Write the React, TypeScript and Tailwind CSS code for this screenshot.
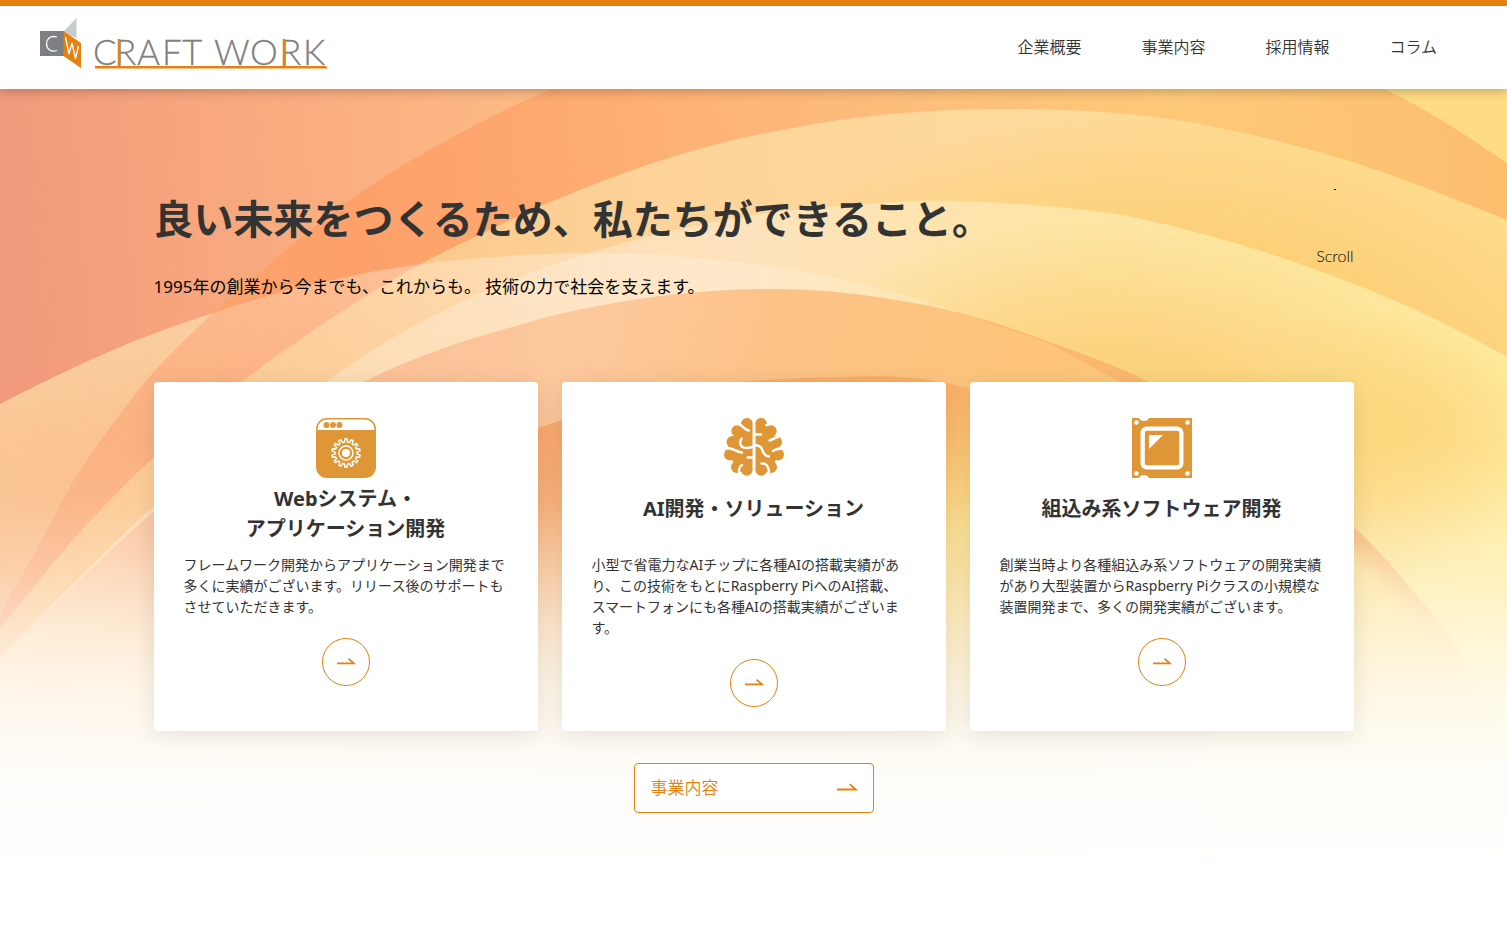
import React from "react";

type Point = [number, number];

/** Smooth curve through the given points. */
function curve(points: Point[]): string {
  let d = `M${points[0][0]} ${points[0][1]}`;
  for (let i = 0; i < points.length - 1; i++) {
    const a = points[Math.max(i - 1, 0)];
    const b = points[i];
    const c = points[i + 1];
    const e = points[Math.min(i + 2, points.length - 1)];
    d += `C${b[0] + (c[0] - a[0]) / 6} ${b[1] + (c[1] - a[1]) / 6} ${c[0] - (e[0] - b[0]) / 6} ${c[1] - (e[1] - b[1]) / 6} ${c[0]} ${c[1]}`;
  }
  return d;
}

const OUTER = curve([[-30, 675], [0, 615], [40, 543], [80, 471], [145, 382], [213, 313], [281, 254], [354, 197], [440, 144], [552, 89], [720, 30], [960, 0], [1200, 20], [1384, 89], [1507, 163], [1560, 205]]) + "V944H-30Z";
const LOWER = curve([[-60, 440], [0, 404], [113, 350], [213, 313], [310, 285], [430, 263], [582, 253], [720, 260], [855, 282], [965, 314], [1149, 382], [1354, 527], [1507, 712]]) + "V944H-60Z";
const WIDE = curve([[-40, 675], [0, 628], [80, 532], [154, 457], [242, 382], [330, 319], [419, 265], [494, 228], [560, 198], [650, 164], [747, 137], [880, 115], [1018, 109], [1169, 119], [1340, 158], [1507, 220], [1560, 245]]) + "V944H-40Z";
const INNER = curve([[-20, 680], [23, 634], [80, 577], [154, 506], [235, 445], [325, 382], [410, 328], [509, 281], [616, 245], [730, 219], [839, 206], [955, 201], [1101, 212], [1210, 236], [1314, 269], [1416, 310], [1507, 357], [1560, 390]]) + "V944H-20Z";
const CORE = curve([[-30, 690], [23, 636], [80, 581], [154, 512], [250, 444], [364, 382], [436, 351], [505, 329], [582, 309], [670, 295], [760, 289], [855, 294], [965, 314], [1050, 344], [1120, 382], [1230, 450], [1400, 610], [1507, 760]]) + "V944H-30Z";
const WEDGE = curve([[965, 314], [1050, 342], [1149, 382], [1250, 444], [1354, 527], [1430, 604], [1507, 712]]) + "L1480 700L1300 520L1120 382L1050 344Z";
const DEEP = curve([[80, 780], [150, 710], [300, 560], [450, 465], [550, 424], [690, 388], [834, 377], [941, 382], [1060, 420], [1200, 500]]) + "V944H80Z";

function Waves() {
  return (
    <svg className="absolute inset-0 -z-10 h-full w-full" viewBox="0 89 1507 855" preserveAspectRatio="none" aria-hidden="true">
      <defs>
        <linearGradient id="base" gradientUnits="userSpaceOnUse" x1="0" y1="160" x2="1507" y2="60">
          <stop offset="0" stopColor="#f1997b" />
          <stop offset=".13" stopColor="#f7a67e" />
          <stop offset=".32" stopColor="#fdb783" />
          <stop offset=".9" stopColor="#fddc84" />
        </linearGradient>
        <linearGradient id="under" gradientUnits="userSpaceOnUse" x1="60" y1="350" x2="110" y2="480">
          <stop offset="0" stopColor="#f8c48f" />
          <stop offset="1" stopColor="#fab77f" />
        </linearGradient>
        <linearGradient id="outer" gradientUnits="userSpaceOnUse" x1="60" y1="300" x2="1507" y2="160">
          <stop offset="0" stopColor="#fba671" />
          <stop offset=".2" stopColor="#fda06a" />
          <stop offset=".32" stopColor="#fda76f" />
          <stop offset=".55" stopColor="#fdbb7b" />
          <stop offset=".78" stopColor="#fcc978" />
          <stop offset="1" stopColor="#fdbe6e" />
        </linearGradient>
        <linearGradient id="wide" gradientUnits="userSpaceOnUse" x1="300" y1="330" x2="1507" y2="220">
          <stop offset="0" stopColor="#fcc384" />
          <stop offset=".3" stopColor="#fdd399" />
          <stop offset=".6" stopColor="#fdda9c" />
          <stop offset="1" stopColor="#fddd8c" />
        </linearGradient>
        <radialGradient id="wideDepth" gradientUnits="userSpaceOnUse" cx="0" cy="0" r="1" gradientTransform="translate(1150 480) scale(520 370)">
          <stop offset=".65" stopColor="#fdd078" />
          <stop offset="1" stopColor="#fdd078" stopOpacity="0" />
        </radialGradient>
        <linearGradient id="inner" gradientUnits="userSpaceOnUse" x1="400" y1="330" x2="1507" y2="330">
          <stop offset="0" stopColor="#fcd7a8" />
          <stop offset=".3" stopColor="#fde3be" />
          <stop offset=".6" stopColor="#fde5a5" />
          <stop offset="1" stopColor="#feeb9e" />
        </linearGradient>
        <radialGradient id="innerDepth" gradientUnits="userSpaceOnUse" cx="0" cy="0" r="1" gradientTransform="translate(1110 450) scale(410 235)">
          <stop offset=".4" stopColor="#fcd37e" />
          <stop offset="1" stopColor="#fcd37e" stopOpacity="0" />
        </radialGradient>
        <radialGradient id="rightDepth" gradientUnits="userSpaceOnUse" cx="0" cy="0" r="1" gradientTransform="translate(1370 430) scale(200 120)">
          <stop offset=".2" stopColor="#fdd980" />
          <stop offset="1" stopColor="#fdd980" stopOpacity="0" />
        </radialGradient>
        <linearGradient id="veil" gradientUnits="userSpaceOnUse" x1="0" y1="0" x2="960" y2="0">
          <stop offset="0" stopColor="#fff0d5" stopOpacity=".26" />
          <stop offset=".6" stopColor="#fff0e0" stopOpacity=".45" />
          <stop offset="1" stopColor="#fff0d0" stopOpacity=".4" />
        </linearGradient>
        <linearGradient id="veilDown" x1="0" y1="0" x2="0" y2="1">
          <stop offset="0" stopColor="#fff" />
          <stop offset=".2" stopColor="#aaa" />
          <stop offset=".5" stopColor="#555" />
        </linearGradient>
        <mask id="veilMask">
          <rect y="253" x="-60" width="1030" height="691" fill="url(#veilDown)" />
        </mask>
        <linearGradient id="core" gradientUnits="userSpaceOnUse" x1="600" y1="300" x2="1000" y2="420">
          <stop offset="0" stopColor="#fcc89c" />
          <stop offset=".4" stopColor="#fcc388" />
          <stop offset="1" stopColor="#fdc47a" />
        </linearGradient>
        <linearGradient id="coreSide" gradientUnits="userSpaceOnUse" x1="0" y1="0" x2="560" y2="0">
          <stop offset="0" stopColor="#fbc8a4" />
          <stop offset=".3" stopColor="#fbba94" />
          <stop offset="1" stopColor="#fbb590" stopOpacity="0" />
        </linearGradient>
        <linearGradient id="coreRight" gradientUnits="userSpaceOnUse" x1="1060" y1="0" x2="1360" y2="0">
          <stop offset="0" stopColor="#fde08a" stopOpacity="0" />
          <stop offset="1" stopColor="#fde08a" />
        </linearGradient>
        <linearGradient id="coreDown" gradientUnits="userSpaceOnUse" x1="0" y1="500" x2="0" y2="680">
          <stop offset="0" stopColor="#fbdca8" stopOpacity="0" />
          <stop offset="1" stopColor="#fbdca8" stopOpacity=".9" />
        </linearGradient>
        <radialGradient id="coreGlow" gradientUnits="userSpaceOnUse" cx="0" cy="0" r="1" gradientTransform="translate(1010 590) scale(300 200)">
          <stop offset=".35" stopColor="#fcd97f" />
          <stop offset="1" stopColor="#fcd97f" stopOpacity="0" />
        </radialGradient>
        <linearGradient id="deep" gradientUnits="userSpaceOnUse" x1="100" y1="0" x2="1200" y2="0">
          <stop offset="0" stopColor="#fac09b" stopOpacity="0" />
          <stop offset=".4" stopColor="#f9aa70" />
          <stop offset=".75" stopColor="#fbae66" />
          <stop offset="1" stopColor="#fde08a" />
        </linearGradient>
        <linearGradient id="wedge" gradientUnits="userSpaceOnUse" x1="965" y1="0" x2="1507" y2="0">
          <stop offset="0" stopColor="#fcb86e" />
          <stop offset=".7" stopColor="#f9b870" />
          <stop offset=".95" stopColor="#fab488" stopOpacity="0" />
        </linearGradient>
        <linearGradient id="fade" gradientUnits="userSpaceOnUse" x1="0" y1="440" x2="0" y2="870">
          <stop offset="0" stopColor="#fff" stopOpacity="0" />
          <stop offset=".14" stopColor="#fff" stopOpacity=".08" />
          <stop offset=".3" stopColor="#fff" stopOpacity=".3" />
          <stop offset=".45" stopColor="#fff" stopOpacity=".56" />
          <stop offset=".6" stopColor="#fff" stopOpacity=".78" />
          <stop offset=".75" stopColor="#fff" stopOpacity=".92" />
          <stop offset="1" stopColor="#fff" />
        </linearGradient>
        <filter id="soft" x="-20%" y="-20%" width="140%" height="140%">
          <feGaussianBlur stdDeviation="8" />
        </filter>
        <clipPath id="clipLower">
          <path d={LOWER} />
        </clipPath>
      </defs>
      <rect x="0" y="89" width="1507" height="855" fill="url(#base)" />
      <path d={LOWER} fill="url(#under)" />
      <path d={OUTER} fill="url(#outer)" />
      <path d={WIDE} fill="url(#wide)" />
      <path d={WIDE} fill="url(#wideDepth)" />
      <path d={INNER} fill="url(#inner)" />
      <path d={INNER} fill="url(#innerDepth)" />
      <path d={INNER} fill="url(#rightDepth)" />
      <path d={LOWER} fill="url(#veil)" mask="url(#veilMask)" />
      <path d={CORE} fill="url(#core)" />
      <path d={CORE} fill="url(#coreSide)" />
      <path d={DEEP} fill="url(#deep)" />
      <path d={CORE} fill="url(#coreRight)" />
      <path d={CORE} fill="url(#coreDown)" />
      <path d={CORE} fill="url(#coreGlow)" />
      <g clipPath="url(#clipLower)">
        <path d={WEDGE} fill="url(#wedge)" />
        <path d="M1240 474L1354 550L1420 612L1507 730V944H1200V540Z" fill="#fde293" filter="url(#soft)" />
      </g>
      <rect x="0" y="89" width="1507" height="855" fill="url(#fade)" />
    </svg>
  );
}

function Logo() {
  return (
    <svg className="block h-[60px] w-[300px]" viewBox="40 17 300 60" role="img" aria-label="CRAFT WORK">
      <path d="M64 31L76.500 18V38L64 33Z" fill="#c9cccc" />
      <rect x="40" y="31" width="24" height="25" fill="#7d7f82" />
      <path d="M63.500 31L81 43V68L63.500 56Z" fill="#e6800f" />
      <path d="M57 37C50 35 46.500 39.500 46.500 43.700C46.500 48.500 50.500 52.500 57 50.500" fill="none" stroke="#fff" strokeWidth="1.300" />
      <path d="M65.500 37L69 54L72 43L75.500 58.500L78.500 46" fill="none" stroke="#fff" strokeWidth="1.300" />
      <g fill="#808080" stroke="#808080" strokeWidth=".3" fontFamily="Lato, sans-serif" fontWeight="300" fontSize="35">
        <text x="93" y="65">C</text>
        <text x="115" y="65">R</text>
        <text x="137" y="65">A</text>
        <text x="162" y="65">F</text>
        <text x="182" y="65">T</text>
        <text x="214" y="65">W</text>
        <text x="250" y="65">O</text>
        <text x="280" y="65">R</text>
        <text x="303" y="65">K</text>
      </g>
      <path d="M119 39V66M284 39V66" stroke="#e6800f" strokeWidth="2.600" />
      <path d="M95 66H326L328 68.500H95Z" fill="#e6800f" />
    </svg>
  );
}

function Arrow({ className }: { className: string }) {
  return (
    <svg className={className} viewBox="0 0 20 8" fill="none" stroke="#e6800f" strokeWidth="1.800" overflow="visible" aria-hidden="true">
      <path d="M0 5.500H18.800L12.800 .2" />
    </svg>
  );
}

/** Outline of a gear with fourteen teeth. */
function gear(cx: number, cy: number): string {
  const points: string[] = [];
  for (let i = 0; i < 14; i++) {
    const at = (r: number, t: number) => {
      const a = ((i + t) / 14) * Math.PI * 2 - Math.PI / 2;
      return `${cx + r * Math.cos(a)} ${cy + r * Math.sin(a)}`;
    };
    points.push(at(14.2, -0.16), at(14.2, 0.16), at(11, 0.32), at(11, 0.68));
  }
  return `M${points.join("L")}Z`;
}

function BrowserIcon() {
  return (
    <svg className="h-15 w-15" viewBox="0 0 60 60" aria-hidden="true">
      <rect width="60" height="60" rx="11" fill="#de9636" />
      <path d="M1.500 12V11A9.500 9.500 0 0 1 11 1.500H49A9.500 9.500 0 0 1 58.500 11V12Z" fill="#fff" />
      <g fill="#de9636">
        <circle cx="10.500" cy="7" r="3" />
        <circle cx="17" cy="7" r="3" />
        <circle cx="23.500" cy="7" r="3" />
      </g>
      <g fill="none" stroke="#fff" strokeLinejoin="round">
        <path strokeWidth="1.500" d={gear(30, 35)} />
        <circle cx="30" cy="35" r="7" strokeWidth="1.400" />
      </g>
      <circle cx="30" cy="35" r="4" fill="#fff" />
    </svg>
  );
}

function BrainIcon() {
  return (
    <svg className="h-15 w-15" viewBox="0 0 60 60" aria-hidden="true">
      <g fill="#de9636">
        <circle cx="22.800" cy="5.800" r="5.800" />
        <circle cx="13" cy="13" r="5.700" />
        <circle cx="8.500" cy="24" r="6" />
        <circle cx="6" cy="36.500" r="6" />
        <circle cx="13" cy="49" r="6" />
        <circle cx="22.800" cy="52" r="5.800" />
        <path d="M23 0Q28.600 1 28.600 6V52L23 57L13 50L7.500 41L9 20L14 12Z" />
        <circle cx="37.200" cy="5.800" r="5.800" />
        <circle cx="47" cy="13" r="5.700" />
        <circle cx="52" cy="24" r="6" />
        <circle cx="54" cy="36.500" r="6" />
        <circle cx="47" cy="49" r="6" />
        <circle cx="37.200" cy="52" r="5.800" />
        <path d="M37 0Q31.400 1 31.400 6V52L37 57L47 50L52.500 41L51 20L46 12Z" />
      </g>
      <g fill="none" stroke="#fff" strokeWidth="2.400" strokeLinecap="round">
        <path d="M30 0V60" />
        <path d="M16 6.500C19 8 20 12 25 12.500M17.500 20.500C14 27 18 30 23 30C26 30 27 29 30 28.500M2 30.500C9 29 11 34 18 34.500M23.500 39.500H29M15 54C15 50 16 48 18 47M31 16.500H37M30 27C42 27 36 38 45 38.500M42 7C43 7 44 6.500 45 6M45.500 22.500C48 22 50 20 54 19M49 33C51 31.500 55 30.500 59 31M37.500 45.500C42 45 44.500 48 45 54" />
      </g>
    </svg>
  );
}

function ChipIcon() {
  return (
    <svg className="h-15 w-15" viewBox="0 0 60 60" aria-hidden="true">
      <path d="M0 0H7C8 4 16 4 17 0H60V60H17C16 56 8 56 7 60H0Z" fill="#de9636" />
      <g fill="#fff">
        <circle cx="4.500" cy="4.500" r="2.300" />
        <circle cx="55.500" cy="4.500" r="2.300" />
        <circle cx="4.500" cy="55.500" r="2.300" />
        <circle cx="55.500" cy="55.500" r="2.300" />
        <path d="M17 17H31L17 31Z" />
      </g>
      <rect x="10.700" y="10.700" width="38.600" height="38.600" rx="4" fill="none" stroke="#fff" strokeWidth="4.300" />
    </svg>
  );
}

const NAV = ["企業概要", "事業内容", "採用情報", "コラム"];

const SERVICES: { title: string[]; icon: React.ReactNode; text: React.ReactNode }[] = [
  {
    title: ["Webシステム・", "アプリケーション開発"],
    icon: <BrowserIcon />,
    text: "フレームワーク開発からアプリケーション開発まで多くに実績がございます。リリース後のサポートもさせていただきます。",
  },
  {
    title: ["AI開発・ソリューション"],
    icon: <BrainIcon />,
    text: (
      <>
        小型で省電力なAIチップに各種AIの搭載実績があり、この技術をもとにRaspberry PiへのAI搭載、
        <br />
        スマートフォンにも各種AIの搭載実績がございます。
      </>
    ),
  },
  {
    title: ["組込み系ソフトウェア開発"],
    icon: <ChipIcon />,
    text: "創業当時より各種組込み系ソフトウェアの開発実績があり大型装置からRaspberry Piクラスの小規模な装置開発まで、多くの開発実績がございます。",
  },
];

export default function App() {
  return (
    <div className="flex min-h-screen flex-col bg-white font-['Noto_Sans','Noto_Sans_CJK_JP',sans-serif] text-[#333]" lang="ja">
      <header className="relative z-10 flex items-center justify-between border-t-6 border-[#e6800f] bg-white pt-[11px] pr-[70px] pb-3 pl-10 shadow-[0_2px_10px_rgba(0,0,0,0.25)]">
        <a href="#top">
          <Logo />
        </a>
        <nav>
          <ul className="flex gap-15 text-base leading-6 font-[350]">
            {NAV.map((item) => (
              <li key={item}>
                <a href="#menu">{item}</a>
              </li>
            ))}
          </ul>
        </nav>
      </header>

      <main className="relative isolate flex-1 px-6 pt-[100px] pb-20">
        <Waves />
        <div className="mx-auto max-w-[1200px]">
          <div className="flex items-start justify-between">
            <div>
              <h1 className="text-[40px] leading-[60px] font-bold">良い未来をつくるため、私たちができること。</h1>
              <p className="mt-6 text-[17px] leading-7 text-black">1995年の創業から今までも、これからも。 技術の力で社会を支えます。</p>
            </div>
            <a href="#services" className="flex flex-col items-center gap-[54px] font-['Lato',sans-serif] text-base leading-6 font-light text-black">
              <span className="h-px w-0.5 bg-black" />
              Scroll
            </a>
          </div>

          <div id="services" className="mt-[81px] grid grid-cols-3 gap-6">
            {SERVICES.map((service) => (
              <section key={service.title[0]} className="flex flex-col items-center rounded-sm bg-white px-[30px] pt-9 pb-6 shadow-[0_4px_24px_rgba(0,0,0,0.1)]">
                {service.icon}
                <h2 className={`mt-1.5 min-h-15 text-center text-xl leading-[30px] font-bold ${service.title.length === 1 ? "pt-2.5" : ""}`}>
                  {service.title.map((line) => (
                    <span key={line} className="block">
                      {line}
                    </span>
                  ))}
                </h2>
                <p className="mt-2.5 w-full text-sm leading-[21px]">{service.text}</p>
                <a href="#detail" aria-label={service.title.join("")} className="mt-[21px] flex h-12 w-12 items-center justify-center rounded-full border border-[#e6800f]">
                  <Arrow className="h-2 w-[18px]" />
                </a>
              </section>
            ))}
          </div>

          <a href="#business" className="mx-auto mt-8 flex h-[50px] w-60 items-center justify-between rounded-sm border border-[#e6800f] bg-white px-4 text-[17px] leading-6 font-[350] text-[#e6800f]">
            事業内容
            <Arrow className="h-2 w-5" />
          </a>
        </div>
      </main>
    </div>
  );
}
